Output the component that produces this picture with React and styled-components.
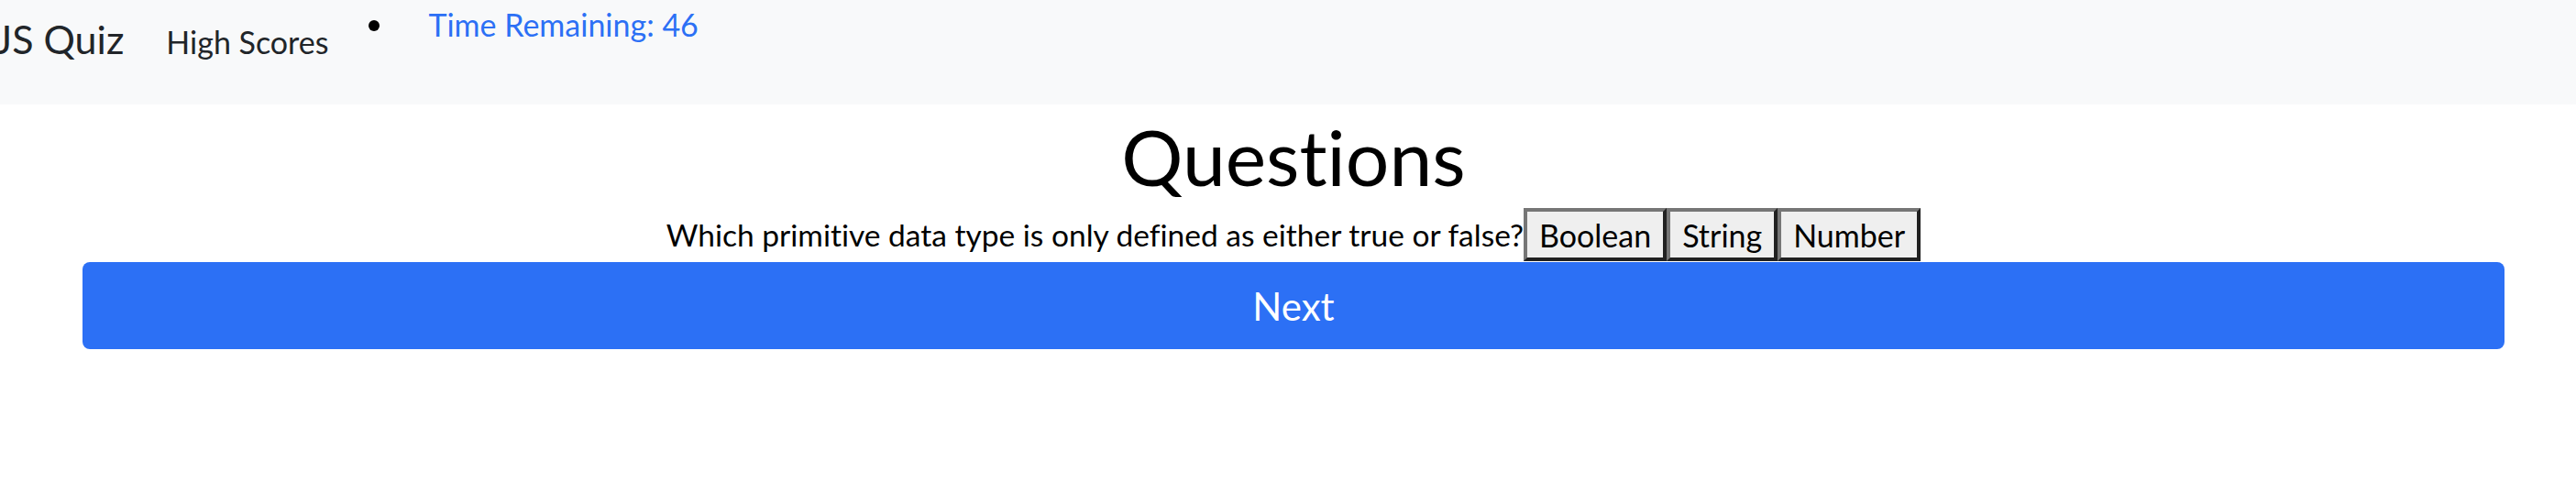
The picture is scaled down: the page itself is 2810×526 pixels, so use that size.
import styled, { createGlobalStyle } from "styled-components";

const GlobalStyle = createGlobalStyle`
  html, body {
    margin: 0;
    padding: 0;
    background: #fff;
    font-family: Lato, "Open Sans", sans-serif;
    font-variant-ligatures: none;
    color: #000;
    overflow: hidden;
  }
`

const choices = ["Boolean", "String", "Number"];

const App = () => {
  return (
    <>
      <GlobalStyle />
      <Navbar>
        <Brand>JS Quiz</Brand>
        <NavLink>High Scores</NavLink>
        <TimerItem>
          <Dot />
          <Timer>Time Remaining: 46</Timer>
        </TimerItem>
      </Navbar>
      <Main>
        <Title>Questions</Title>
        <QuestionRow>
          <QuestionText>Which primitive data type is only defined as either true or false?</QuestionText>
          {choices.map(choice => (
            <Choice key={choice}>{choice}</Choice>
          ))}
        </QuestionRow>
        <NextButton>Next</NextButton>
      </Main>
    </>
  )
}

export default App;

const Navbar = styled.nav`
  display: flex;
  align-items: flex-start;
  height: 114px;
  background-color: #f8f9fa;
  box-sizing: border-box;
`
const Brand = styled.a`
  margin-left: -5px;
  margin-top: 18px;
  font-size: 43px;
  line-height: 50px;
  color: #212529;
`
const NavLink = styled.a`
  margin-left: 46px;
  margin-top: 26px;
  font-size: 34px;
  line-height: 40px;
  color: #212529;
`
const TimerItem = styled.div`
  display: flex;
  align-items: flex-start;
  margin-left: 44px;
`
const Dot = styled.span`
  width: 12px;
  height: 12px;
  margin-top: 22px;
  border-radius: 50%;
  background: #000;
`
const Timer = styled.span`
  margin-left: 53px;
  margin-top: 7px;
  font-size: 34px;
  line-height: 40px;
  color: #2c70f5;
`
const Main = styled.main`
  padding: 0 78px 0 90px;
  text-align: center;
`
const Title = styled.h1`
  margin: 0;
  height: 113px;
  font-size: 84px;
  line-height: 113px;
  font-weight: 400;
`
const QuestionRow = styled.div`
  display: flex;
  justify-content: center;
  align-items: center;
  height: 58px;
`
const QuestionText = styled.span`
  font-size: 33.5px;
`
const Choice = styled.button`
  height: 58px;
  padding: 0 13px;
  border: 4px outset #767676;
  background: #efefef;
  font-family: inherit;
  font-variant-ligatures: none;
  font-size: 34px;
  color: #000;
`
const NextButton = styled.button`
  display: block;
  width: 100%;
  height: 95px;
  margin-top: 1px;
  border: none;
  border-radius: 8px;
  background-color: #2c70f5;
  color: #fff;
  font-family: inherit;
  font-size: 42px;
`
